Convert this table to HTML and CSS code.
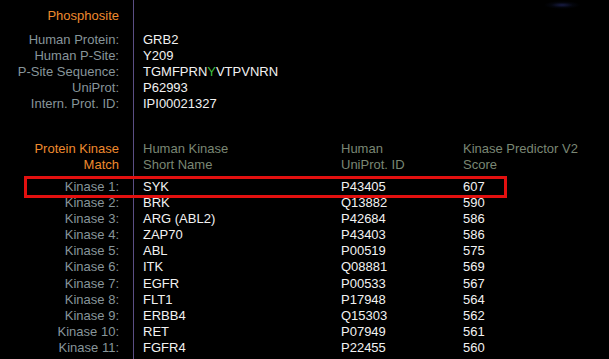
FILE: index.html
```html
<!DOCTYPE html>
<html>
<head>
<meta charset="utf-8">
<link rel="stylesheet" href="styles.css">
</head>
<body>
<div class="page">
  <div class="row title-row">
    <div class="label orange">Phosphosite</div>
  </div>
  <div class="info">
    <div class="row"><div class="label">Human Protein:</div><div class="val">GRB2</div></div>
    <div class="row"><div class="label">Human P-Site:</div><div class="val">Y209</div></div>
    <div class="row"><div class="label">P-Site Sequence:</div><div class="val">TGMFPRN<span class="green">Y</span>VTPVNRN</div></div>
    <div class="row"><div class="label">UniProt:</div><div class="val">P62993</div></div>
    <div class="row"><div class="label">Intern. Prot. ID:</div><div class="val">IPI00021327</div></div>
  </div>
  <div class="row head-row">
    <div class="label orange">Protein Kinase<br>Match</div>
    <div class="colhead">Human Kinase<br>Short Name</div>
    <div class="colhead">Human<br>UniProt. ID</div>
    <div class="colhead">Kinase Predictor V2<br>Score</div>
  </div>
  <div class="kinases">
    <div class="row highlight"><div class="label">Kinase 1:</div><div class="val">SYK</div><div class="val">P43405</div><div class="val">607</div></div>
    <div class="row"><div class="label">Kinase 2:</div><div class="val">BRK</div><div class="val">Q13882</div><div class="val">590</div></div>
    <div class="row"><div class="label">Kinase 3:</div><div class="val">ARG (ABL2)</div><div class="val">P42684</div><div class="val">586</div></div>
    <div class="row"><div class="label">Kinase 4:</div><div class="val">ZAP70</div><div class="val">P43403</div><div class="val">586</div></div>
    <div class="row"><div class="label">Kinase 5:</div><div class="val">ABL</div><div class="val">P00519</div><div class="val">575</div></div>
    <div class="row"><div class="label">Kinase 6:</div><div class="val">ITK</div><div class="val">Q08881</div><div class="val">569</div></div>
    <div class="row"><div class="label">Kinase 7:</div><div class="val">EGFR</div><div class="val">P00533</div><div class="val">567</div></div>
    <div class="row"><div class="label">Kinase 8:</div><div class="val">FLT1</div><div class="val">P17948</div><div class="val">564</div></div>
    <div class="row"><div class="label">Kinase 9:</div><div class="val">ERBB4</div><div class="val">Q15303</div><div class="val">562</div></div>
    <div class="row"><div class="label">Kinase 10:</div><div class="val">RET</div><div class="val">P07949</div><div class="val">561</div></div>
    <div class="row"><div class="label">Kinase 11:</div><div class="val">FGFR4</div><div class="val">P22455</div><div class="val">560</div></div>
  </div>
</div>
</body>
</html>
```
FILE: styles.css
```css
html, body {
  margin: 0;
  padding: 0;
  background: #000;
}
body {
  width: 609px;
  height: 359px;
  overflow: hidden;
  font-family: "Liberation Sans", Arial, sans-serif;
  font-size: 13px;
  line-height: 16px;
}
.page {
  height: 359px;
  padding-top: 8px;
  box-sizing: border-box;
  background:
    radial-gradient(ellipse 18px 4px at 562px 5px, rgba(60, 70, 170, 0.4), rgba(20, 30, 70, 0.18) 60%, transparent 100%),
    linear-gradient(#5a4e84, #5a4e84) 133px 0 / 1px 100% no-repeat,
    #000;
}
.row {
  display: grid;
  grid-template-columns: 119px 174px 98px 1fr;
  column-gap: 24px;
  position: relative;
}
.label {
  text-align: right;
  color: #87959a;
  white-space: nowrap;
}
.orange {
  color: #ee8a2e;
}
.val {
  color: #f2f2f2;
  white-space: nowrap;
}
.green {
  color: #3fbf3f;
}
.info {
  margin-top: 8px;
}
.head-row {
  margin-top: 29px;
}
.colhead {
  color: #7a8774;
  white-space: nowrap;
}
.kinases {
  margin-top: 6px;
}
.kinases .row {
  line-height: 16.1px;
}
.highlight::before {
  content: "";
  position: absolute;
  left: 24px;
  width: 483px;
  top: -3px;
  bottom: -3px;
  border: 3px solid #e3100f;
  box-sizing: border-box;
}
```
